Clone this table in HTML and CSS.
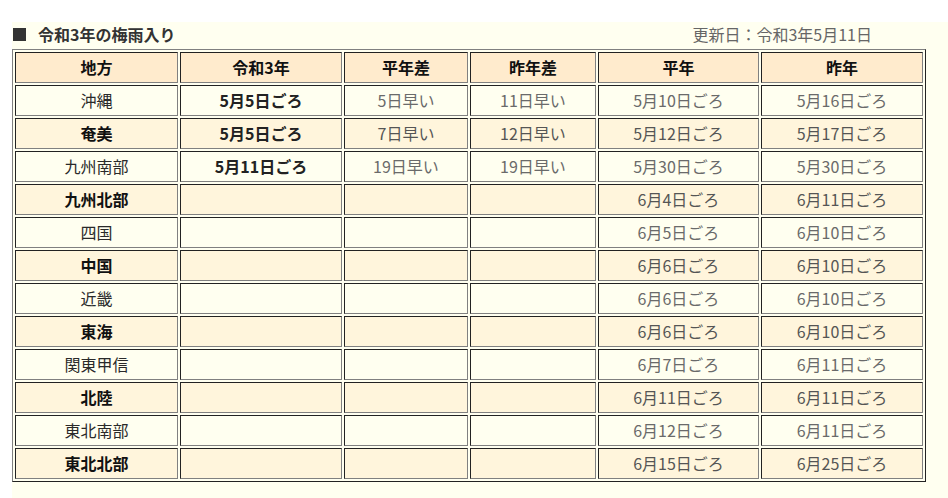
FILE: index.html
```html
<!DOCTYPE html>
<html lang="ja">
<head>
<meta charset="utf-8">
<link rel="stylesheet" href="styles.css">
</head>
<body>
<div class="panel">
  <div class="titlebar">
    <h2 class="title"><span class="mark"></span>令和3年の梅雨入り</h2>
    <div class="updated">更新日：令和3年5月11日</div>
  </div>
  <table class="rain">
    <thead>
      <tr>
        <th class="c1">地方</th>
        <th class="c2">令和3年</th>
        <th class="c3">平年差</th>
        <th class="c4">昨年差</th>
        <th class="c5">平年</th>
        <th class="c6">昨年</th>
      </tr>
    </thead>
    <tbody>
      <tr class="odd"><td class="area">沖縄</td><td class="this">5月5日ごろ</td><td>5日早い</td><td>11日早い</td><td>5月10日ごろ</td><td>5月16日ごろ</td></tr>
      <tr class="even"><td class="area">奄美</td><td class="this">5月5日ごろ</td><td>7日早い</td><td>12日早い</td><td>5月12日ごろ</td><td>5月17日ごろ</td></tr>
      <tr class="odd"><td class="area">九州南部</td><td class="this">5月11日ごろ</td><td>19日早い</td><td>19日早い</td><td>5月30日ごろ</td><td>5月30日ごろ</td></tr>
      <tr class="even"><td class="area">九州北部</td><td></td><td></td><td></td><td>6月4日ごろ</td><td>6月11日ごろ</td></tr>
      <tr class="odd"><td class="area">四国</td><td></td><td></td><td></td><td>6月5日ごろ</td><td>6月10日ごろ</td></tr>
      <tr class="even"><td class="area">中国</td><td></td><td></td><td></td><td>6月6日ごろ</td><td>6月10日ごろ</td></tr>
      <tr class="odd"><td class="area">近畿</td><td></td><td></td><td></td><td>6月6日ごろ</td><td>6月10日ごろ</td></tr>
      <tr class="even"><td class="area">東海</td><td></td><td></td><td></td><td>6月6日ごろ</td><td>6月10日ごろ</td></tr>
      <tr class="odd"><td class="area">関東甲信</td><td></td><td></td><td></td><td>6月7日ごろ</td><td>6月11日ごろ</td></tr>
      <tr class="even"><td class="area">北陸</td><td></td><td></td><td></td><td>6月11日ごろ</td><td>6月11日ごろ</td></tr>
      <tr class="odd"><td class="area">東北南部</td><td></td><td></td><td></td><td>6月12日ごろ</td><td>6月11日ごろ</td></tr>
      <tr class="even"><td class="area">東北北部</td><td></td><td></td><td></td><td>6月15日ごろ</td><td>6月25日ごろ</td></tr>
    </tbody>
  </table>
</div>
</body>
</html>
```

FILE: styles.css
```css
html, body {
  margin: 0;
  padding: 0;
  background: #ffffff;
}

body {
  font-family: "Noto Sans CJK JP", "Noto Sans", sans-serif;
  font-size: 16px;
  color: #333;
}

.panel {
  margin: 22px 0 0 12px;
  background: #fffff0;
  height: 476px;
}

.titlebar {
  width: 914px;
  height: 27px;
  display: flex;
  align-items: center;
  justify-content: space-between;
}

.title {
  margin: 0;
  display: flex;
  align-items: center;
  font-size: 16px;
  font-weight: bold;
  color: #333;
  line-height: 25px;
  padding-bottom: 2px;
}

.mark {
  display: inline-block;
  width: 13px;
  height: 13px;
  margin-left: 1px;
  margin-right: 12px;
  background: #333;
}

.updated {
  padding-right: 54px;
  padding-bottom: 2px;
  color: #666;
  line-height: 25px;
}

.rain {
  border-collapse: separate;
  border-spacing: 2px;
  table-layout: fixed;
  width: 914px;
  border: 1px solid;
  border-color: #808080 #222 #222 #808080;
}

.rain th,
.rain td {
  box-sizing: border-box;
  height: 31px;
  padding: 0 0 2px 0;
  text-align: center;
  vertical-align: middle;
  border: 1px solid;
  border-color: #222 #808080 #808080 #222;
  line-height: 20px;
  white-space: nowrap;
}

.rain th {
  background: #ffebcd;
  color: #111;
  font-weight: bold;
}

.c1 { width: 163px; }
.c2 { width: 162px; }
.c3 { width: 124px; }
.c4 { width: 126px; }
.c5 { width: 161px; }
.c6 { width: 162px; }

.odd td {
  background: #fffff0;
  color: #6a6a6a;
}

.even td {
  background: #fff5dc;
  color: #555;
}

.odd td.area {
  color: #2a2a2a;
  font-weight: normal;
}

.even td.area {
  color: #111;
  font-weight: bold;
}

td.this {
  color: #222;
  font-weight: bold;
}
```
